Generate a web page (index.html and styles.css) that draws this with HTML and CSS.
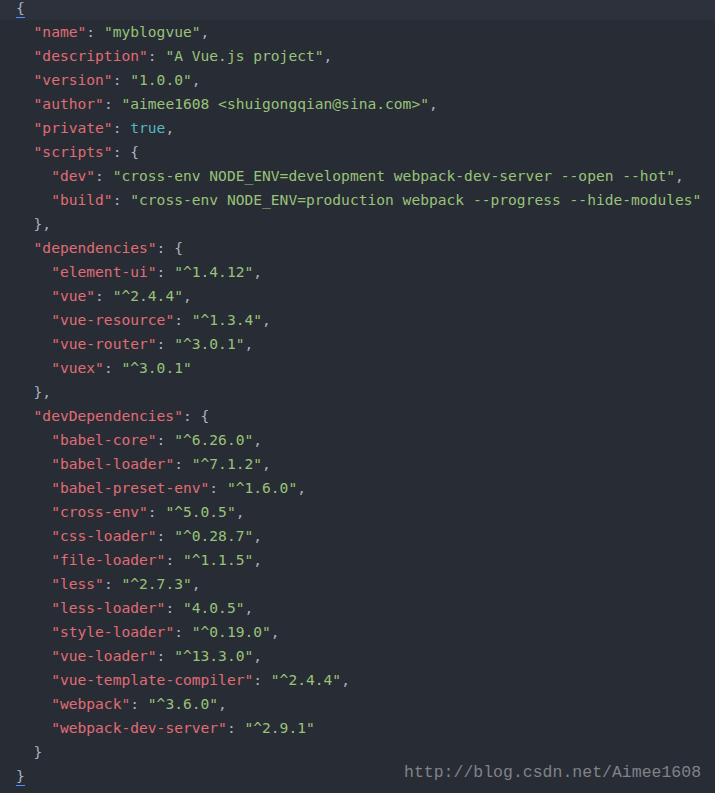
FILE: index.html
```html
<!DOCTYPE html>
<html>
<head>
<meta charset="utf-8">
<link rel="stylesheet" href="styles.css">
</head>
<body>
<div class="editor">
<div class="code">
<div class="line current"><span class="p match">{</span></div>
<div class="line">  <span class="k">"name"</span><span class="p">: </span><span class="s">"myblogvue"</span><span class="p">,</span></div>
<div class="line">  <span class="k">"description"</span><span class="p">: </span><span class="s">"A Vue.js project"</span><span class="p">,</span></div>
<div class="line">  <span class="k">"version"</span><span class="p">: </span><span class="s">"1.0.0"</span><span class="p">,</span></div>
<div class="line">  <span class="k">"author"</span><span class="p">: </span><span class="s">"aimee1608 &lt;shuigongqian@sina.com&gt;"</span><span class="p">,</span></div>
<div class="line">  <span class="k">"private"</span><span class="p">: </span><span class="b">true</span><span class="p">,</span></div>
<div class="line">  <span class="k">"scripts"</span><span class="p">: {</span></div>
<div class="line">    <span class="k">"dev"</span><span class="p">: </span><span class="s">"cross-env NODE_ENV=development webpack-dev-server --open --hot"</span><span class="p">,</span></div>
<div class="line">    <span class="k">"build"</span><span class="p">: </span><span class="s">"cross-env NODE_ENV=production webpack --progress --hide-modules"</span></div>
<div class="line">  <span class="p">},</span></div>
<div class="line">  <span class="k">"dependencies"</span><span class="p">: {</span></div>
<div class="line">    <span class="k">"element-ui"</span><span class="p">: </span><span class="s">"^1.4.12"</span><span class="p">,</span></div>
<div class="line">    <span class="k">"vue"</span><span class="p">: </span><span class="s">"^2.4.4"</span><span class="p">,</span></div>
<div class="line">    <span class="k">"vue-resource"</span><span class="p">: </span><span class="s">"^1.3.4"</span><span class="p">,</span></div>
<div class="line">    <span class="k">"vue-router"</span><span class="p">: </span><span class="s">"^3.0.1"</span><span class="p">,</span></div>
<div class="line">    <span class="k">"vuex"</span><span class="p">: </span><span class="s">"^3.0.1"</span></div>
<div class="line">  <span class="p">},</span></div>
<div class="line">  <span class="k">"devDependencies"</span><span class="p">: {</span></div>
<div class="line">    <span class="k">"babel-core"</span><span class="p">: </span><span class="s">"^6.26.0"</span><span class="p">,</span></div>
<div class="line">    <span class="k">"babel-loader"</span><span class="p">: </span><span class="s">"^7.1.2"</span><span class="p">,</span></div>
<div class="line">    <span class="k">"babel-preset-env"</span><span class="p">: </span><span class="s">"^1.6.0"</span><span class="p">,</span></div>
<div class="line">    <span class="k">"cross-env"</span><span class="p">: </span><span class="s">"^5.0.5"</span><span class="p">,</span></div>
<div class="line">    <span class="k">"css-loader"</span><span class="p">: </span><span class="s">"^0.28.7"</span><span class="p">,</span></div>
<div class="line">    <span class="k">"file-loader"</span><span class="p">: </span><span class="s">"^1.1.5"</span><span class="p">,</span></div>
<div class="line">    <span class="k">"less"</span><span class="p">: </span><span class="s">"^2.7.3"</span><span class="p">,</span></div>
<div class="line">    <span class="k">"less-loader"</span><span class="p">: </span><span class="s">"4.0.5"</span><span class="p">,</span></div>
<div class="line">    <span class="k">"style-loader"</span><span class="p">: </span><span class="s">"^0.19.0"</span><span class="p">,</span></div>
<div class="line">    <span class="k">"vue-loader"</span><span class="p">: </span><span class="s">"^13.3.0"</span><span class="p">,</span></div>
<div class="line">    <span class="k">"vue-template-compiler"</span><span class="p">: </span><span class="s">"^2.4.4"</span><span class="p">,</span></div>
<div class="line">    <span class="k">"webpack"</span><span class="p">: </span><span class="s">"^3.6.0"</span><span class="p">,</span></div>
<div class="line">    <span class="k">"webpack-dev-server"</span><span class="p">: </span><span class="s">"^2.9.1"</span></div>
<div class="line">  <span class="p">}</span></div>
<div class="line"><span class="p match">}</span></div>
</div>
<div class="watermark">http://blog.csdn.net/Aimee1608</div>
</div>
</body>
</html>
```

FILE: styles.css
```css
html, body {
  margin: 0;
  padding: 0;
  background: #282c34;
}
.editor {
  position: relative;
  width: 715px;
  height: 793px;
  overflow: hidden;
  background: #282c34;
}
.code {
  margin-top: -4px;
  font-family: "DejaVu Sans Mono", "Liberation Mono", monospace;
  font-size: 14.6px;
  line-height: 24px;
  color: #abb2bf;
}
.line {
  height: 24px;
  padding-left: 16px;
  white-space: pre;
}
.line.current {
  background: #2c313b;
}
.k { color: #e06c75; }
.s { color: #98c379; }
.b { color: #56b6c2; }
.p { color: #abb2bf; }
.match {
  display: inline-block;
  line-height: 19px;
  border-bottom: 1px solid #528bff;
}
.watermark {
  position: absolute;
  left: 404px;
  top: 762px;
  font-family: "Liberation Mono", monospace;
  font-size: 16.5px;
  line-height: 22px;
  color: #80838a;
  white-space: nowrap;
}
```
